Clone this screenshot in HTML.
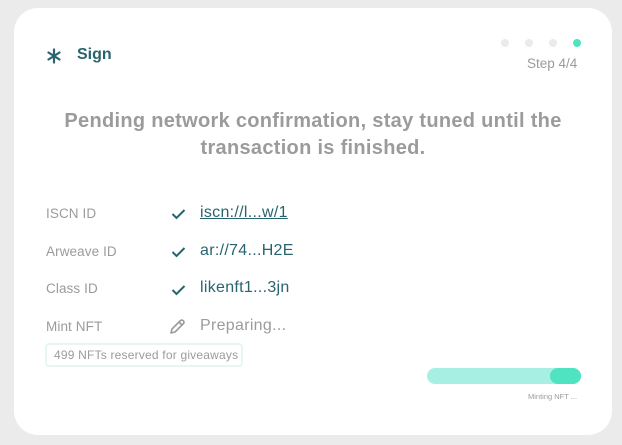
<!DOCTYPE html>
<html><head><style>
*{margin:0;padding:0;box-sizing:border-box}
body{width:622px;height:445px;background:#ebebeb;font-family:"Liberation Sans",sans-serif;position:relative;overflow:hidden}
.card{position:absolute;left:14px;top:8px;width:598px;height:427px;background:#fff;border-radius:24px}
.a{position:absolute;white-space:nowrap}
.lab{left:46px;font-size:13.5px;color:#9b9b9b;letter-spacing:0.1px}
.val{left:200px;font-size:16px;color:#28646e;letter-spacing:0.3px}
.dot{position:absolute;top:39px;width:8px;height:8px;border-radius:50%;background:#ebebeb}
</style></head><body>
<div class="card"></div>
<svg class="a" style="left:47px;top:48px" width="14" height="16" viewBox="0 0 14 16"><g stroke="#28646e" stroke-width="2.2" stroke-linecap="round"><line x1="7" y1="1.5" x2="7" y2="14.5"/><line x1="1.5" y1="4.5" x2="12.5" y2="11.5"/><line x1="1.5" y1="11.5" x2="12.5" y2="4.5"/></g></svg>
<div class="a" style="left:77px;top:46px;font-size:16px;font-weight:bold;color:#28646e">Sign</div>
<div class="dot" style="left:501px"></div><div class="dot" style="left:525px"></div><div class="dot" style="left:549px"></div><div class="dot" style="left:573px;background:#50e3c2"></div>
<div class="a" style="left:527px;top:56px;font-size:13.5px;color:#9b9b9b">Step 4/4</div>
<div class="a" style="left:0;width:626px;top:108px;text-align:center;font-size:20px;font-weight:bold;color:#9b9b9b;line-height:27px;white-space:normal;letter-spacing:0.3px">Pending network confirmation, stay tuned until the<br>transaction is finished.</div>
<div class="a lab" style="top:206px">ISCN ID</div>
<div class="a lab" style="top:244px">Arweave ID</div>
<div class="a lab" style="top:281px">Class ID</div>
<div class="a lab" style="top:319px">Mint NFT</div>
<svg class="a" style="left:171px;top:208px" width="15" height="12" viewBox="0 0 15 12"><path d="M1.5 6 L5.5 10 L13.5 2" fill="none" stroke="#28646e" stroke-width="2"/></svg>
<svg class="a" style="left:171px;top:246px" width="15" height="12" viewBox="0 0 15 12"><path d="M1.5 6 L5.5 10 L13.5 2" fill="none" stroke="#28646e" stroke-width="2"/></svg>
<svg class="a" style="left:171px;top:284px" width="15" height="12" viewBox="0 0 15 12"><path d="M1.5 6 L5.5 10 L13.5 2" fill="none" stroke="#28646e" stroke-width="2"/></svg>
<svg class="a" style="left:169px;top:318px" width="17" height="17" viewBox="0 0 17 17"><path d="M2 15 L3 11 L11.5 2.5 Q13 1.5 14.5 3 Q15.5 4.5 14.5 5.5 L6 14 Z M10 4 L13 7" fill="none" stroke="#9b9b9b" stroke-width="1.6" stroke-linejoin="round"/></svg>
<div class="a val" style="top:204px;text-decoration:underline">iscn://l...w/1</div>
<div class="a val" style="top:242px">ar://74...H2E</div>
<div class="a val" style="top:279px">likenft1...3jn</div>
<div class="a val" style="top:317px;color:#9b9b9b">Preparing...</div>
<div class="a" style="left:45px;top:343px;width:198px;height:24px;border:2px solid #e6f7f2;border-radius:4px;font-size:12px;color:#9b9b9b;padding:3px 0 0 7px;letter-spacing:0.2px">499 NFTs reserved for giveaways</div>
<div class="a" style="left:427px;top:368px;width:154px;height:16px;border-radius:8px;background:#a8efe3"></div>
<div class="a" style="left:550px;top:368px;width:31px;height:16px;border-radius:8px;background:#50e3c2"></div>
<div class="a" style="left:528px;top:392px;font-size:7.5px;color:#9b9b9b">Minting NFT ...</div>
</body></html>
